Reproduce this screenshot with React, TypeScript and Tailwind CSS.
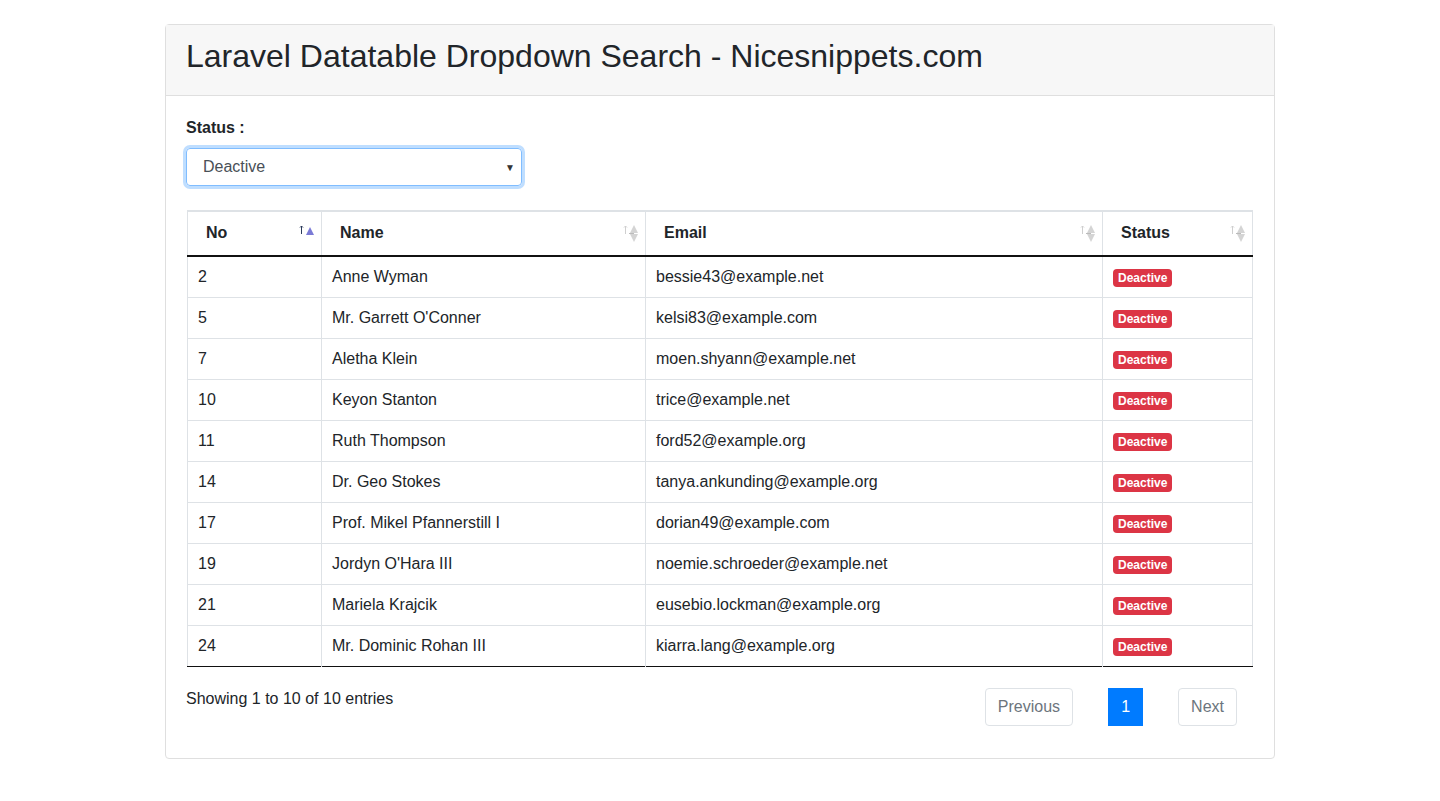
import React from "react";

const rows: [string, string, string][] = [
  ["2", "Anne Wyman", "bessie43@example.net"],
  ["5", "Mr. Garrett O'Conner", "kelsi83@example.com"],
  ["7", "Aletha Klein", "moen.shyann@example.net"],
  ["10", "Keyon Stanton", "trice@example.net"],
  ["11", "Ruth Thompson", "ford52@example.org"],
  ["14", "Dr. Geo Stokes", "tanya.ankunding@example.org"],
  ["17", "Prof. Mikel Pfannerstill I", "dorian49@example.com"],
  ["19", "Jordyn O'Hara III", "noemie.schroeder@example.net"],
  ["21", "Mariela Krajcik", "eusebio.lockman@example.org"],
  ["24", "Mr. Dominic Rohan III", "kiarra.lang@example.org"],
];

function SortIcon({ active }: { active?: boolean }) {
  return (
    <svg width="16" height="20" viewBox="0 0 16 20" className="absolute right-[6px] top-1/2 -translate-y-1/2">
      <g stroke={active ? "#2a3a5a" : "#cfcfcf"} strokeWidth="1" fill="none">
        <line x1="2.5" y1="2" x2="2.5" y2="10" />
        <polyline points="1,3.5 2.5,2 4,3.5" />
      </g>
      {active ? (
        <polygon points="7,11 11,3 15,11" fill="#7b7bd6" />
      ) : (
        <g fill="#d4d4d4">
          <polygon points="7,9 11,1 15,9" />
          <polygon points="7,10 11,18 15,10" />
          <line x1="6" y1="9.5" x2="11" y2="9.5" stroke="#bbb" strokeWidth="1" />
        </g>
      )}
    </svg>
  );
}

export default function App() {
  return (
    <div className="min-h-[801px] bg-white pt-6 text-[#212529]" style={{ fontFamily: '"Liberation Sans", Arial, sans-serif' }}>
      <div className="mx-auto w-[1110px] rounded border border-[#dfdfdf]">
        <div className="bg-[#f7f7f7] border-b border-[#dfdfdf] px-5 pt-3 pb-3">
          <h1 className="text-[32px] leading-[38.4px] mb-2">Laravel Datatable Dropdown Search - Nicesnippets.com</h1>
        </div>
        <div className="px-5 pt-[22px] pb-[32px]">
          <div className="font-bold text-[16px] leading-[20px]">Status :</div>
          <div className="mt-[10px] w-[336px] h-[38px] rounded border border-[#80bdff] shadow-[0_0_0_3px_rgba(0,123,255,0.25)] flex items-center justify-between pl-4 pr-[6px] text-[#495057] text-[16px]">
            <span>Deactive</span>
            <span className="text-[10px] text-[#333]">▼</span>
          </div>

          <table className="mt-6 ml-px w-[1066px] border-collapse border-t-2 border-l border-r border-[#dee2e6] text-[16px]">
            <thead>
              <tr className="h-[45px] border-b-2 border-[#111]">
                <th className="relative w-[134px] border-r border-[#dee2e6] text-left pl-[18px] pb-[2px] font-bold">No<SortIcon active /></th>
                <th className="relative w-[324px] border-r border-[#dee2e6] text-left pl-[18px] pb-[2px] font-bold">Name<SortIcon /></th>
                <th className="relative w-[457px] border-r border-[#dee2e6] text-left pl-[18px] pb-[2px] font-bold">Email<SortIcon /></th>
                <th className="relative text-left pl-[18px] pb-[2px] font-bold">Status<SortIcon /></th>
              </tr>
            </thead>
            <tbody>
              {rows.map((r, i) => (
                <tr key={r[0]} className={`h-[41px] ${i === rows.length - 1 ? "border-b border-[#111]" : "border-b border-[#dee2e6]"}`}>
                  <td className="border-r border-[#dee2e6] pl-[10px]">{r[0]}</td>
                  <td className="border-r border-[#dee2e6] pl-[10px]">{r[1]}</td>
                  <td className="border-r border-[#dee2e6] pl-[10px]">{r[2]}</td>
                  <td className="pl-[10px]">
                    <span className="inline-block bg-[#dc3545] text-white text-[12px] font-bold leading-none rounded px-[5px] py-[3px]">Deactive</span>
                  </td>
                </tr>
              ))}
            </tbody>
          </table>

          <div className="mt-[20px] flex items-start justify-between">
            <div className="text-[16px]">Showing 1 to 10 of 10 entries</div>
            <div className="flex items-center mr-[17px] mt-[1px]">
              <div className="h-[38px] px-3 flex items-center border border-[#dee2e6] rounded text-[#6c757d]">Previous</div>
              <div className="ml-[35px] h-[38px] w-[35px] flex items-center justify-center bg-[#007bff] text-white">1</div>
              <div className="ml-[35px] h-[38px] px-3 flex items-center border border-[#dee2e6] rounded text-[#6c757d]">Next</div>
            </div>
          </div>
        </div>
      </div>
    </div>
  );
}
